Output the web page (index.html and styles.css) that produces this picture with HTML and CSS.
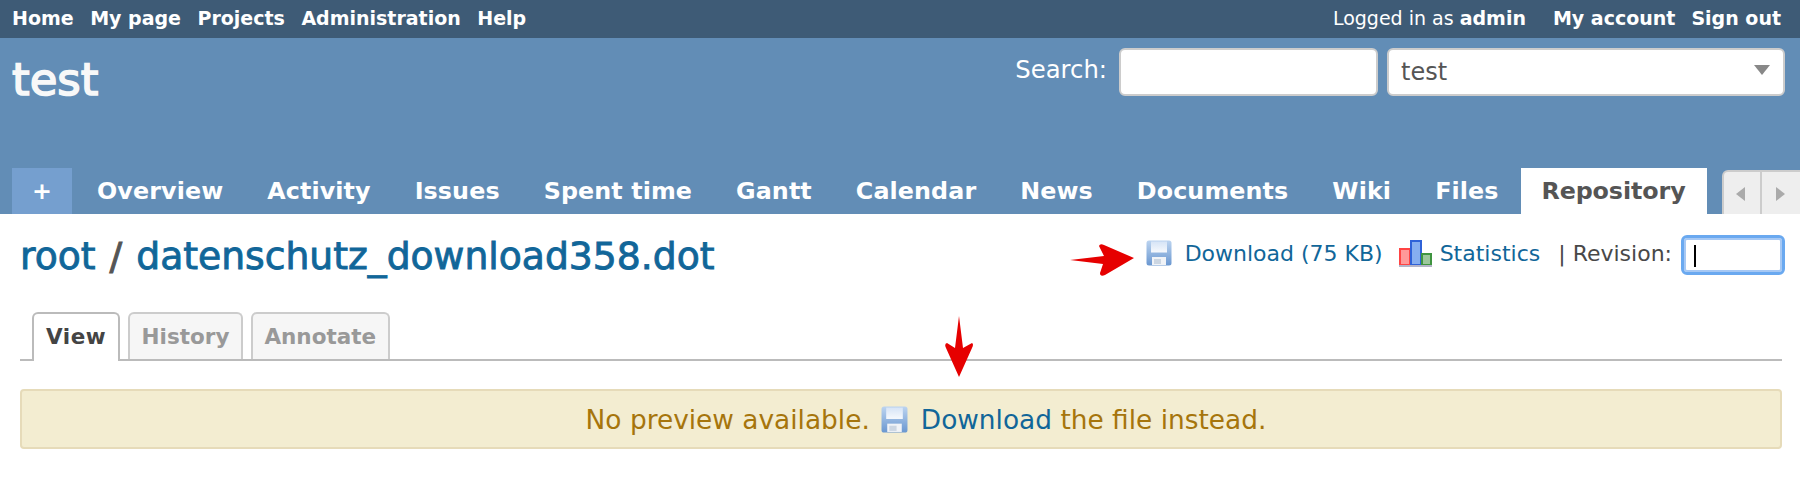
FILE: index.html
```html
<!DOCTYPE html>
<html lang="en">
<head>
  <meta charset="UTF-8" />
  <title>datenschutz_download358.dot - test</title>
  <link rel="stylesheet" href="styles.css">
</head>
<body>
  <svg width="0" height="0" class="defs">
    <defs>
      <linearGradient id="floppy-bg" x1="0" y1="0" x2="0" y2="1">
        <stop offset="0" stop-color="#bcd4f0"/>
        <stop offset="1" stop-color="#6a97d0"/>
      </linearGradient>
      <linearGradient id="floppy-label" x1="0" y1="0" x2="0" y2="1">
        <stop offset="0" stop-color="#d6e4f6"/>
        <stop offset="1" stop-color="#f6f9fd"/>
      </linearGradient>
      <symbol id="floppy" viewBox="0 0 26 26">
        <rect x="0.5" y="0.5" width="25" height="25" rx="2.5" fill="url(#floppy-bg)"/>
        <rect x="5" y="1.5" width="16" height="11" fill="url(#floppy-label)"/>
        <rect x="6" y="17" width="14" height="8" fill="#f0f3f7"/>
        <rect x="8" y="19" width="7" height="5" fill="#ccd6e2"/>
      </symbol>
    </defs>
  </svg>

  <div class="top-menu">
    <ul class="menu-left">
      <li><a href="#">Home</a></li>
      <li><a href="#">My page</a></li>
      <li><a href="#">Projects</a></li>
      <li><a href="#">Administration</a></li>
      <li><a href="#">Help</a></li>
    </ul>
    <div class="menu-right">
      <span class="logged">Logged in as <b>admin</b></span>
      <a href="#">My account</a>
      <a href="#">Sign out</a>
    </div>
  </div>

  <div class="header">
    <div class="header-row">
      <h1>test</h1>
      <div class="quick-search">
        <label for="q">Search:</label>
        <input id="q" class="search-input" type="text">
        <div class="jump-box">test</div>
      </div>
    </div>
    <div class="main-menu">
      <a class="tab-new" href="#">+</a>
      <a href="#">Overview</a>
      <a href="#">Activity</a>
      <a href="#">Issues</a>
      <a href="#">Spent time</a>
      <a href="#">Gantt</a>
      <a href="#">Calendar</a>
      <a href="#">News</a>
      <a href="#">Documents</a>
      <a href="#">Wiki</a>
      <a href="#">Files</a>
      <a class="selected" href="#">Repository</a>
      <div class="tab-scroll">
        <span class="arrow-left"></span>
        <span class="arrow-right"></span>
      </div>
    </div>
  </div>

  <div class="content">
    <div class="title-row">
      <h2><a href="#">root</a> / <a href="#">datenschutz_download358.dot</a></h2>
      <div class="contextual">
        <svg class="red-arrow" width="66" height="34" viewBox="0 0 66 34">
          <path d="M1 17 L35 13 L30 3 Q31 0 35 2 L65 15 L36 32 Q31 34 31 30 L34 21 Z" fill="#e60000"/>
        </svg>
        <a class="icon-link floppy-link" href="#"><svg class="floppy-icon" width="26" height="26"><use href="#floppy"/></svg>Download (75 KB)</a>
        <a class="icon-link" href="#">
          <svg class="chart-icon" width="33" height="28" viewBox="0 0 33 28">
            <rect x="1" y="10" width="10" height="16" fill="#ff9a9a" stroke="#f44" stroke-width="2"/>
            <rect x="12" y="2" width="10" height="24" fill="#86aef0" stroke="#2f62d8" stroke-width="2"/>
            <rect x="23" y="15" width="9" height="11" fill="#9cc79c" stroke="#3f9440" stroke-width="2"/>
            <rect x="0" y="26" width="33" height="2" fill="#b4b4c8"/>
          </svg>Statistics</a>
        <span class="revision">| Revision:</span>
        <div class="rev-input"><span class="caret"></span></div>
      </div>
    </div>

    <div class="tabs">
      <a class="selected" href="#">View</a>
      <a href="#">History</a>
      <a href="#">Annotate</a>
    </div>

    <div class="nodata-wrap">
      <svg class="red-arrow-down" width="28" height="62" viewBox="0 0 28 62">
        <path d="M14 0 L18 32 L27 27 Q29 28 27 32 L14 61 L1 32 Q-1 28 2 27 L10 32 Z" fill="#e60000"/>
      </svg>
      <p class="warning">No preview available.<svg class="floppy-icon" width="27" height="27"><use href="#floppy"/></svg><a href="#">Download</a> the file instead.</p>
    </div>
  </div>
</body>
</html>
```

FILE: styles.css
```css
body
{
  font-family: "DejaVu Sans", Verdana, sans-serif;
  margin: 0;
  padding: 0;
  background: #fff;
  color: #484848;
  overflow: hidden;
}
a
{
  text-decoration: none;
  color: #169;
}
.defs
{
  display: block;
  height: 0;
}
.top-menu
{
  background: #3e5b76;
  color: #fff;
  height: 38px;
  display: flex;
  justify-content: space-between;
  align-items: center;
  padding: 0 19px 2px 12px;
  box-sizing: border-box;
  font-size: 19px;
  font-weight: bold;
}
.top-menu a
{
  color: #fff;
}
.menu-left
{
  display: flex;
  gap: 16.5px;
  list-style: none;
  margin: 0;
  padding: 0;
}
.menu-right
{
  display: flex;
  gap: 16px;
}
.logged
{
  font-weight: normal;
  margin-right: 11px;
}
.header
{
  background: #628db6;
  color: #fff;
  height: 176px;
  display: flex;
  flex-direction: column;
  justify-content: space-between;
}
.header-row
{
  display: flex;
  justify-content: space-between;
  padding: 10px 15px 0 12px;
}
h1
{
  margin: 2px 0 0;
  font-size: 45px;
  font-weight: normal;
  -webkit-text-stroke: 1.6px #f8f8f8;
  line-height: 60px;
  color: #f8f8f8;
}
.quick-search
{
  display: flex;
  align-items: flex-start;
  font-size: 24.3px;
  line-height: 44px;
}
.quick-search label
{
  margin-right: 12px;
}
.search-input
{
  width: 259px;
  height: 48px;
  box-sizing: border-box;
  border: 2px solid #ccc;
  border-radius: 6px;
  background: #fff;
  margin-right: 9px;
  padding: 0;
}
.jump-box
{
  position: relative;
  width: 398px;
  height: 48px;
  box-sizing: border-box;
  border: 2px solid #ccc;
  border-radius: 6px;
  background: #fff;
  color: #555;
  font-size: 24px;
  line-height: 44px;
  padding-left: 12px;
}
.jump-box::after
{
  content: "";
  position: absolute;
  right: 13px;
  top: 15px;
  border-left: 8px solid transparent;
  border-right: 8px solid transparent;
  border-top: 10px solid #888;
}
.main-menu
{
  display: flex;
  height: 46px;
  padding-left: 12px;
  font-size: 23.8px;
  font-weight: bold;
  line-height: 46px;
  letter-spacing: 0.1px;
  white-space: nowrap;
}
.main-menu a
{
  flex: none;
  color: #fff;
  padding: 0 22px;
}
.main-menu .tab-new
{
  background: #759fcf;
  width: 60px;
  padding: 0;
  text-align: center;
  box-sizing: border-box;
  margin-right: 3px;
}
.main-menu .selected
{
  background: #fff;
  color: #555;
  width: 186px;
  padding: 0;
  box-sizing: border-box;
  text-align: center;
  letter-spacing: -0.1px;
}
.tab-scroll
{
  display: flex;
  flex: none;
  margin-left: 15px;
  height: 44px;
  margin-top: 2px;
}
.tab-scroll span
{
  position: relative;
  display: block;
  width: 40px;
  height: 44px;
  box-sizing: border-box;
  background: #eee;
  border: 2px solid #ccc;
  border-bottom: 0;
}
.tab-scroll .arrow-left
{
  border-radius: 6px 0 0 0;
}
.tab-scroll .arrow-right
{
  border-left: 0;
}
.tab-scroll span::after
{
  content: "";
  position: absolute;
  top: 15px;
  border-top: 7px solid transparent;
  border-bottom: 7px solid transparent;
}
.arrow-left::after
{
  left: 12px;
  border-right: 9px solid #aaa;
}
.arrow-right::after
{
  left: 14px;
  border-left: 9px solid #aaa;
}
.content
{
  padding: 0 18px 0 20px;
}
.title-row
{
  display: flex;
  justify-content: space-between;
  align-items: flex-start;
}
h2
{
  margin: 17px 0 0;
  font-size: 37.7px;
  font-weight: normal;
  -webkit-text-stroke: 0.9px;
  line-height: 50px;
  word-spacing: 2px;
  color: #555;
}
.contextual
{
  display: flex;
  align-items: center;
  font-size: 22px;
  margin-top: 21px;
  height: 36px;
}
.red-arrow
{
  margin: 14px 11px 0 0;
}
.icon-link
{
  display: flex;
  align-items: center;
  gap: 8px;
  margin-right: 17px;
}
.floppy-link
{
  gap: 13px;
  margin-right: 16px;
}
.floppy-icon
{
  filter: blur(0.4px);
}
.icon-link svg
{
  flex: none;
}
.revision
{
  color: #484848;
  margin-left: 1px;
}
.rev-input
{
  width: 98px;
  height: 34px;
  box-sizing: border-box;
  margin: 4px 0 0 12px;
  background: #fff;
  border: 2px solid #a6c8f4;
  outline: 3px solid #6aa9f0;
  border-radius: 3px;
  padding: 5px 8px;
}
.caret
{
  display: block;
  width: 2px;
  height: 22px;
  background: #000;
}
.tabs
{
  display: flex;
  gap: 8px;
  margin-top: 31px;
  height: 47px;
  padding-left: 12px;
  border-bottom: 2px solid #bbb;
  font-size: 21.5px;
  font-weight: bold;
  line-height: 45px;
}
.tabs a
{
  height: 47px;
  box-sizing: border-box;
  padding: 0 11.5px;
  background: #f6f6f6;
  color: #999;
  border: 2px solid #ccc;
  border-bottom: 0;
  border-radius: 6px 6px 0 0;
}
.tabs .selected
{
  height: 49px;
  padding: 0 12px;
  background: #fff;
  color: #444;
  border-color: #bbb;
  letter-spacing: 0.5px;
}
.nodata-wrap
{
  position: relative;
  margin-top: 28px;
}
.red-arrow-down
{
  position: absolute;
  left: 925px;
  top: -73px;
}
.warning
{
  margin: 0;
  height: 60px;
  box-sizing: border-box;
  background: #f3edd1;
  border: 2px solid #e6dbb9;
  border-radius: 4px;
  color: #a6750c;
  font-size: 26.4px;
  line-height: 58px;
  text-align: center;
  padding-left: 50px;
}
.warning svg
{
  vertical-align: -4px;
  margin: 0 13px 0 11px;
}
```
